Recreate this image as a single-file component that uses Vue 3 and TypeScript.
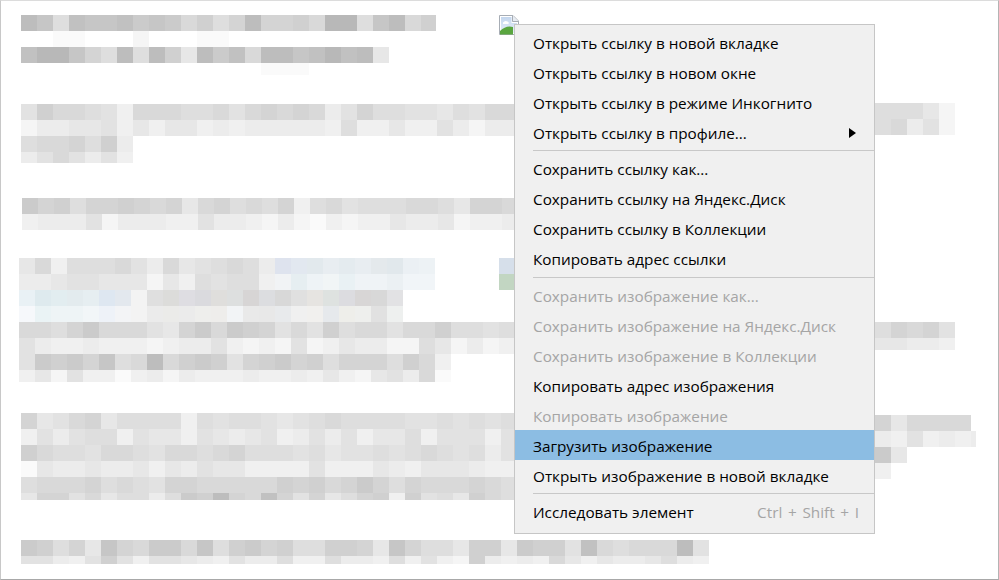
<script setup lang="ts">
interface Row { c: string; h?: number; w?: number; tail?: string[] }
interface Para { cls: string; rows: Row[]; side?: Row[] }

const shade = (d: string): string => {
  const g = d === 'f' ? 255 : Math.round(184 + parseInt(d, 16) * 4.7)
  return `rgb(${g},${g},${g})`
}
const cells = (r: Row): string[] => [...r.c.split('').map(shade), ...(r.tail ?? [])]
const rowStyle = (r: Row) => ({ height: `${r.h ?? 16}px`, width: r.w ? `${r.w}px` : undefined })

const paras: Para[] = [
  {
    cls: 'p1',
    rows: [
      { c: '138233243475861' + '66570083175', w: 415 },
      { c: 'ffeefffdfffeeff' },
      { c: '2003681815a1427' + '1132021a' },
      { c: 'fffffffffffffffeee', h: 12 },
    ],
  },
  {
    cls: 'p2',
    side: [{ c: '888ad' }, { c: '87b9d' }],
    rows: [
      { c: '957789c77788797' + '6767b968899a897' + '7' },
      { c: 'dbbaa9cacaacbcb' + 'bbbbc8ccacc9bdb' + 'b' },
      { c: '877685b' },
      { c: 'b979b9c', h: 11 },
    ],
  },
  {
    cls: 'p3',
    rows: [
      { c: '4658665676a7687' + '86c879888778a667' },
      { c: 'cbbb9dbbbcc9bbc' + 'dbdecdccabbadccb' },
    ],
  },
  {
    cls: 'p4',
    side: [{ c: '86769' }, { c: 'aabbc', h: 12 }],
    rows: [
      {
        c: 'a7c88879b7a9878' + 'b',
        tail: ['#dee3ee', '#e2e8f0', '#e2e9ed', '#e8edf1', '#e4ebef', '#e8edf1', '#e4e9ec', '#e1e8ec', '#ebf0f4', '#edf2f5', '#fff', '#fff', '#fff', '#fff', '#d6dfea'],
      },
      {
        c: 'bba99aaadac8988' + 'c',
        tail: ['#f1f3f5', '#e6eef1', '#eef3f6', '#f1f5f6', '#e9f1f4', '#eff3f6', '#eff3f6', '#ebf0f3', '#f1f5f8', '#f1f5f8', '#fff', '#fff', '#fff', '#fff', '#c2d6c2'],
      },
      {
        c: '',
        tail: ['#e9f1f5', '#deeaee', '#e2edf0', '#e3ebee', '#e6eef1', '#dee7f1', '#e3e8ee', '#f3f3f3', '#dfdfdf', '#dcdcda', '#dedde2', '#dadade', '#dfdedc', '#dddfdf', '#d7d5d5', '#dcdde0', '#d8d8d8', '#e0e0e0', '#e6e4e1', '#dee2e0', '#dcdce0', '#d8d6d6', '#d8d8d8', '#e2e2e4'],
      },
      {
        c: '',
        tail: ['#f6f8fb', '#eaf3f5', '#eef4f6', '#eef4f6', '#f2f6f8', '#eef2f8', '#f3f4f6', '#f3f3f3', '#ebebeb', '#ebebe9', '#ebebeb', '#eeeeec', '#eeedeb', '#f2f4f6', '#e9e9e9', '#e8e8e8', '#e8eaec', '#f0f0f0', '#f1f0ee', '#e6e9ec', '#eeeeea', '#eeefed', '#e1e1e1', '#eef0ef'],
      },
      { c: '778647779a64745' + '6979587797758898' },
      { c: '9bccbcccdcbb9cd' + 'cd9dcabbdd8adbdc' },
      { c: '945463871754596' + '54658666857c' },
      { c: 'cad9ccecbdbcccb' + 'ccbcacda9b7e', h: 12 },
    ],
  },
  {
    cls: 'p5',
    side: [{ c: '6a7777' }, { c: 'bc9cbcb', w: 101 }, { c: '4a' }, { c: 'cf' }],
    rows: [
      { c: '6a976a8888c8988' + '9a98788889989898' },
      { c: 'c9b988c9aac9aba' + '9cb9b9caa8c999c9' },
      { c: '578897789778768' + '8898a998987898b9' },
      { c: 'eabbabbacab9aac' + 'ccc9cccabcaaabcc' },
      { c: '877768789667777' + '7565764686777678' },
      { c: 'a6697a88b845167' + '2696a865c598a578', h: 7 },
    ],
  },
  {
    cls: 'p6',
    rows: [
      { c: '4586a3674473854' + '6588556a3688a55a' + '455927877719' },
      { c: '99bc959c99abc9b' + 'b8cc8bbc8c9cd5bc' + 'bc7acabba8bc', h: 8 },
    ],
  },
]

interface Item { t: string; off?: boolean; on?: boolean; more?: boolean; key?: string }
const groups: Item[][] = [
  [
    { t: 'Открыть ссылку в новой вкладке' },
    { t: 'Открыть ссылку в новом окне' },
    { t: 'Открыть ссылку в режиме Инкогнито' },
    { t: 'Открыть ссылку в профиле...', more: true },
  ],
  [
    { t: 'Сохранить ссылку как...' },
    { t: 'Сохранить ссылку на Яндекс.Диск' },
    { t: 'Сохранить ссылку в Коллекции' },
    { t: 'Копировать адрес ссылки' },
  ],
  [
    { t: 'Сохранить изображение как...', off: true },
    { t: 'Сохранить изображение на Яндекс.Диск', off: true },
    { t: 'Сохранить изображение в Коллекции', off: true },
    { t: 'Копировать адрес изображения' },
    { t: 'Копировать изображение', off: true },
    { t: 'Загрузить изображение', on: true },
    { t: 'Открыть изображение в новой вкладке' },
  ],
  [{ t: 'Исследовать элемент', key: 'Ctrl + Shift + I' }],
]
</script>

<template>
  <div class="page">
    <section v-for="p in paras" :key="p.cls" class="para" :class="p.cls">
      <div class="stack">
        <div v-for="(r, i) in p.rows" :key="i" class="strip" :style="rowStyle(r)">
          <i v-for="(col, j) in cells(r)" :key="j" class="cell" :style="{ background: col }"></i>
        </div>
      </div>
      <div v-if="p.side" class="stack side">
        <div v-for="(r, i) in p.side" :key="i" class="strip" :style="rowStyle(r)">
          <i v-for="(col, j) in cells(r)" :key="j" class="cell" :style="{ background: col }"></i>
        </div>
      </div>
    </section>

    <svg class="broken" width="20" height="20" viewBox="0 0 20 20">
      <defs>
        <linearGradient id="sky" x1="0" y1="0" x2="0" y2="1">
          <stop offset="0" stop-color="#c3d6ee" />
          <stop offset="1" stop-color="#e8f0fa" />
        </linearGradient>
      </defs>
      <path d="M0.5 0.5H14L19.5 6V19.5H0.5Z" fill="#fff" stroke="#a7adb5" />
      <path d="M13.5 0.5V6.5H19.5" fill="#e8ecf2" stroke="#a7adb5" />
      <path d="M2 2H12.5V8H18V18H2Z" fill="url(#sky)" />
      <path d="M4 7.5Q6 5 8.5 6.5T9 9H4Z" fill="#fff" />
      <path d="M1 19.5V16Q7 10 14 12L14 19.5Z" fill="#5aa63f" />
    </svg>

    <nav class="menu">
      <template v-for="(g, gi) in groups" :key="gi">
        <hr v-if="gi > 0" class="sep" :class="{ wide: gi === 2 }" />
        <div
          v-for="it in g"
          :key="it.t"
          class="item"
          :class="{ off: it.off, on: it.on }"
        >
          <span>{{ it.t }}</span>
          <svg v-if="it.more" class="arrow" width="7" height="10" viewBox="0 0 7 10">
            <path d="M0 0L7 5L0 10Z" fill="#000" />
          </svg>
          <span v-if="it.key" class="key">{{ it.key }}</span>
        </div>
      </template>
    </nav>
  </div>
</template>

<style>
html,
body {
  margin: 0;
  background: #fff;
}
</style>

<style scoped>
.page {
  position: relative;
  box-sizing: border-box;
  width: 999px;
  height: 580px;
  overflow: hidden;
  background: #fff;
  border-style: solid;
  border-width: 1px;
  border-color: #dcdcdc #b4b4b4 #a8a8a8 #c8c8c8;
}
.para {
  display: grid;
  grid-template-columns: 854px 1fr;
  align-items: start;
  margin-left: 20px;
}
.p1 {
  margin-top: 14px;
}
.p2 {
  margin-top: 28px;
}
.p2 .stack:first-child {
  margin-top: 1px;
}
.p3 {
  margin-top: 35px;
  margin-left: 21px;
  grid-template-columns: 853px 1fr;
}
.p4 {
  margin-top: 28px;
  margin-left: 18px;
  grid-template-columns: 856px 1fr;
}
.p4 .side {
  margin-top: 64px;
}
.p5 {
  margin-top: 31px;
}
.p5 .side {
  margin-top: 2px;
}
.p6 {
  margin-top: 40px;
}
.stack {
  display: flex;
  flex-direction: column;
}
.strip {
  display: flex;
  overflow: hidden;
}
.cell {
  flex: 0 0 16px;
  height: 100%;
}
.broken {
  position: absolute;
  left: 498px;
  top: 14px;
}
.menu {
  position: absolute;
  left: 513px;
  top: 23px;
  box-sizing: border-box;
  width: 361px;
  height: 510px;
  padding-top: 2px;
  background: #f0f0f0;
  border: 1px solid #c6c6c6;
  font-family: "Open Sans", sans-serif;
  font-size: 15.3px;
  color: #000;
}
.item {
  display: flex;
  align-items: center;
  justify-content: space-between;
  height: 30px;
  padding: 2px 15px 0 18px;
  box-sizing: border-box;
  white-space: nowrap;
}
.item.off {
  color: #a5a5a5;
}
.item.on {
  background: #8cbde3;
}
.arrow {
  margin-right: 3px;
}
.key {
  color: #a5a5a5;
  word-spacing: 1.7px;
}
.sep {
  height: 1px;
  margin: 3px 0 2px 18px;
  border: 0;
  background: #c8c8c8;
}
.sep.wide {
  margin-top: 4px;
}
</style>
